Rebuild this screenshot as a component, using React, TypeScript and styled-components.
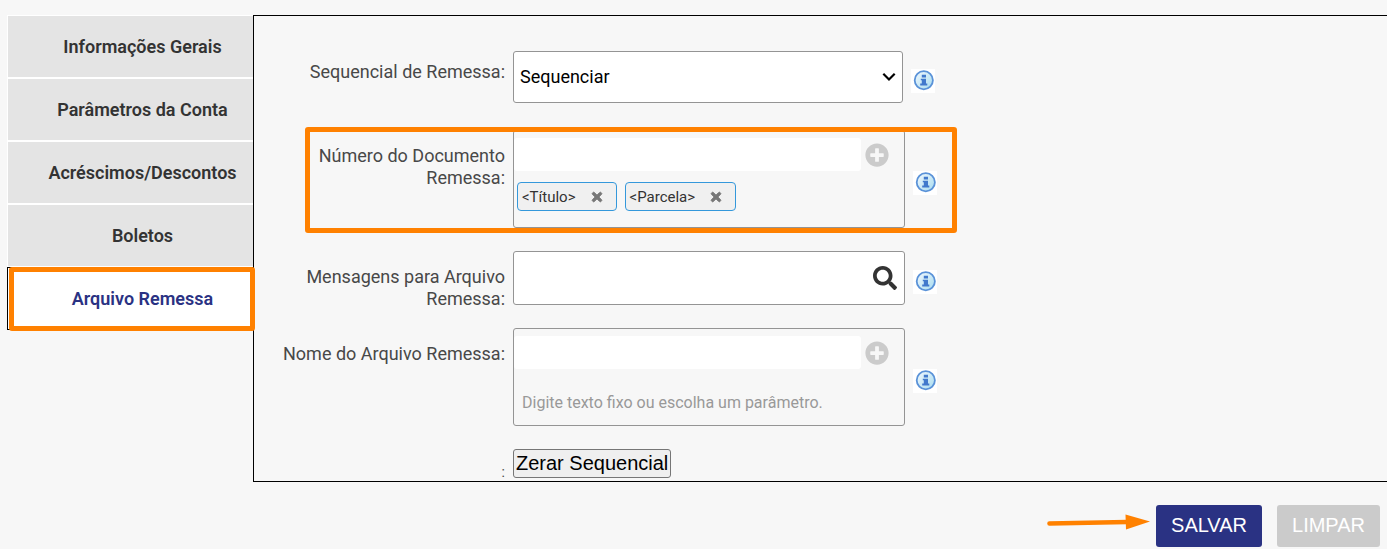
import React from "react";
import styled, { createGlobalStyle, css } from "styled-components";
import { FaPlusCircle, FaSearch, FaTimes } from "react-icons/fa";

const GlobalStyle = createGlobalStyle`
  *, *::before, *::after { box-sizing: border-box; }
  body {
    margin: 0;
    background: #f7f7f7;
    color: #484848;
    font-family: Roboto, "Liberation Sans", sans-serif;
    font-size: 18px;
    line-height: 22px;
  }
  button, input, select { font: inherit; }
`;

const Page = styled.div`
  padding: 15px 0 2px 7px;
  overflow-x: hidden;
`;

const Main = styled.main`
  display: flex;
  align-items: stretch;
`;

const Tabs = styled.nav`
  flex: 0 0 246px;
  display: flex;
  flex-direction: column;
`;

const Highlight = styled.span`
  position: absolute;
  border: 5px solid #ff8100;
  border-radius: 3px;
  pointer-events: none;
`;

const TabHighlight = styled(Highlight)`
  inset: -1px -2px -2px 1px;
`;

const RowHighlight = styled(Highlight)`
  top: -3px;
  bottom: -5px;
  left: 51px;
  width: 652px;
`;

const Tab = styled.button<{ $active?: boolean }>`
  position: relative;
  height: 63px;
  padding: 0 0 0 24px;
  border: 1px solid #fff;
  border-right: 0;
  background: #e4e4e4;
  color: #333;
  font-weight: 600;
  text-align: center;
  cursor: pointer;
  ${(p) =>
    p.$active &&
    css`
      border-color: #000;
      background: #fff;
      color: #2a3283;
    `}
`;

const Panel = styled.form`
  flex: 1;
  border: 1px solid #000;
  border-right: 0;
  padding: 35px 0 3px;
  display: flex;
  flex-direction: column;
  gap: 23px;
`;

const Row = styled.div<{ $first?: boolean }>`
  position: relative;
  display: grid;
  grid-template-columns: 251px auto 24px;
  justify-content: start;
  align-items: center;
  padding-bottom: ${(p) => (p.$first ? 4 : 0)}px;
`;

const Label = styled.label<{ $compact?: boolean }>`
  align-self: start;
  margin-bottom: -8px;
  padding-top: ${(p) => (p.$compact ? 10 : 15)}px;
  text-align: right;
`;

const Colon = styled.label`
  align-self: end;
  font-size: 14px;
  line-height: 12px;
  text-align: right;
`;

const Control = styled.div<{ $width?: number }>`
  width: ${(p) => p.$width ?? 392}px;
  margin: 0 8px;
`;

const SelectWrap = styled(Control)`
  position: relative;
`;

const Select = styled.select`
  appearance: none;
  display: block;
  width: 100%;
  height: 52px;
  padding: 0 32px 0 6px;
  border: 1px solid #949494;
  border-radius: 3px;
  background: #fff;
  color: #000;
`;

const Chevron = styled.svg`
  position: absolute;
  top: 21px;
  right: 7px;
  width: 14px;
  height: 10px;
  pointer-events: none;
`;

const Box = styled(Control)`
  border: 1px solid #949494;
  border-radius: 3px;
  padding-top: 7px;
`;

const Entry = styled.div`
  display: flex;
  align-items: center;
  gap: 4px;
`;

const EntryInput = styled.input`
  width: 347px;
  height: 33px;
  padding: 0 6px;
  border: 0;
  border-radius: 3px;
  background: #fff;
`;

const IconButton = styled.button`
  display: flex;
  padding: 0;
  border: 0;
  background: none;
  color: inherit;
  cursor: pointer;
`;

const AddButton = styled(IconButton)`
  color: #cbcbcb;
  font-size: 24px;
`;

const Chips = styled.div`
  display: flex;
  gap: 8px;
  padding: 11px 3px 16px;
`;

const Chip = styled.span`
  display: flex;
  align-items: center;
  gap: 14px;
  height: 29px;
  padding: 0 12px 0 4px;
  border: 1px solid #3498db;
  border-radius: 4px;
  background: #f0f0f0;
  color: #333;
  font-size: 15px;
`;

const RemoveButton = styled(IconButton)`
  color: #777;
  font-size: 14px;
  svg {
    stroke: #777;
    stroke-width: 36px;
  }
`;

const Hint = styled.p`
  margin: 0;
  padding: 23px 8px 11px;
  color: #999;
  font-size: 16px;
`;

const SearchBox = styled(Control)`
  display: flex;
  align-items: center;
  height: 54px;
  padding-right: 7px;
  border: 1px solid #949494;
  border-radius: 3px;
  background: #fff;
`;

const SearchInput = styled.input`
  flex: 1;
  height: 100%;
  min-width: 0;
  padding: 0 6px;
  border: 0;
  background: transparent;
`;

const SearchButton = styled(IconButton)`
  color: #333;
  font-size: 24px;
`;

const InfoButton = styled(IconButton)`
  margin-top: 8px;
  width: 24px;
  height: 24px;
  background: #fff;
`;

const ResetButton = styled.button`
  height: 29px;
  margin-left: 8px;
  padding: 0 2px 2px;
  border: 1px solid #767676;
  border-radius: 3px;
  background: #efefef;
  color: #000;
  font-family: "Liberation Sans", Arial, sans-serif;
  font-size: 20px;
  cursor: pointer;
`;

const Footer = styled.footer`
  display: flex;
  justify-content: flex-end;
  align-items: center;
  padding: 23px 7px 0 0;
`;

const Arrow = styled.svg`
  width: 103px;
  height: 16px;
  margin-bottom: 8px;
`;

const Action = styled.button<{ $primary?: boolean }>`
  height: 42px;
  padding: 0 15px 2px;
  margin-left: ${(p) => (p.$primary ? 6 : 15)}px;
  border: 0;
  border-radius: 3px;
  background: ${(p) => (p.$primary ? "#2a3283" : "#cbcbcb")};
  color: #fff;
  font-family: "Liberation Sans", Arial, sans-serif;
  font-size: 20px;
  cursor: pointer;
`;

function Info({ about }: { about: string }) {
  return (
    <InfoButton type="button" aria-label={`Ajuda: ${about}`}>
      <svg width="24" height="24" viewBox="0 0 24 24">
        <defs>
          <linearGradient id="info-fill" x1="0" y1="0" x2="1" y2="1">
            <stop offset="0" stopColor="#f2f9ff" />
            <stop offset="0.5" stopColor="#cdeaf6" />
            <stop offset="1" stopColor="#a5dbef" />
          </linearGradient>
        </defs>
        <circle cx="12.8" cy="11.2" r="9.1" fill="url(#info-fill)" stroke="#5a92d8" strokeWidth="1.8" />
        <path d="M10.800 5.700h4.200v2.700h-4.200zM9.800 9.700h5.200v4.800h1.300v2H9.200v-2h1.600v-3.200h-1z" fill="#4179cc" />
      </svg>
    </InfoButton>
  );
}

const tabs = ["Informações Gerais", "Parâmetros da Conta", "Acréscimos/Descontos", "Boletos", "Arquivo Remessa"];
const parameters = ["<Título>", "<Parcela>"];

export default function App() {
  return (
    <Page>
      <GlobalStyle />
      <Main>
        <Tabs>
          {tabs.map((tab) => {
            const active = tab === "Arquivo Remessa";
            return (
              <Tab key={tab} type="button" $active={active}>
                {tab}
                {active && <TabHighlight />}
              </Tab>
            );
          })}
        </Tabs>
        <Panel id="remessa" onSubmit={(e) => e.preventDefault()}>
          <Row $first>
            <Label htmlFor="sequencial" $compact>Sequencial de Remessa:</Label>
            <SelectWrap $width={390}>
              <Select id="sequencial">
                <option>Sequenciar</option>
              </Select>
              <Chevron viewBox="0 0 14 10">
                <path d="M1.3 1.8L7 7.5l5.7-5.7" fill="none" stroke="#000" strokeWidth="2.2" />
              </Chevron>
            </SelectWrap>
            <Info about="Sequencial de Remessa" />
          </Row>
          <Row>
            <Label htmlFor="documento">Número do Documento Remessa:</Label>
            <Box>
              <Entry>
                <EntryInput id="documento" type="text" />
                <AddButton type="button" aria-label="Adicionar"><FaPlusCircle /></AddButton>
              </Entry>
              <Chips>
                {parameters.map((name) => (
                  <Chip key={name}>
                    {name}
                    <RemoveButton type="button" aria-label={`Remover ${name}`}><FaTimes /></RemoveButton>
                  </Chip>
                ))}
              </Chips>
            </Box>
            <Info about="Número do Documento Remessa" />
            <RowHighlight />
          </Row>
          <Row>
            <Label htmlFor="mensagens">Mensagens para Arquivo Remessa:</Label>
            <SearchBox>
              <SearchInput id="mensagens" type="text" />
              <SearchButton type="button" aria-label="Pesquisar"><FaSearch /></SearchButton>
            </SearchBox>
            <Info about="Mensagens para Arquivo Remessa" />
          </Row>
          <Row>
            <Label htmlFor="nome">Nome do Arquivo Remessa:</Label>
            <Box>
              <Entry>
                <EntryInput id="nome" type="text" />
                <AddButton type="button" aria-label="Adicionar"><FaPlusCircle /></AddButton>
              </Entry>
              <Hint>Digite texto fixo ou escolha um parâmetro.</Hint>
            </Box>
            <Info about="Nome do Arquivo Remessa" />
          </Row>
          <Row>
            <Colon htmlFor="zerar">:</Colon>
            <ResetButton id="zerar" type="button">Zerar Sequencial</ResetButton>
          </Row>
        </Panel>
      </Main>
      <Footer>
        <Arrow viewBox="0 0 103 16" aria-hidden="true">
          <path d="M2.5 9.5L80 8" fill="none" stroke="#ff8100" strokeWidth="4.6" strokeLinecap="round" />
          <path d="M78.5 0.5L103 7.5L79 15.500z" fill="#ff8100" />
        </Arrow>
        <Action type="submit" form="remessa" $primary>SALVAR</Action>
        <Action type="reset" form="remessa">LIMPAR</Action>
      </Footer>
    </Page>
  );
}
